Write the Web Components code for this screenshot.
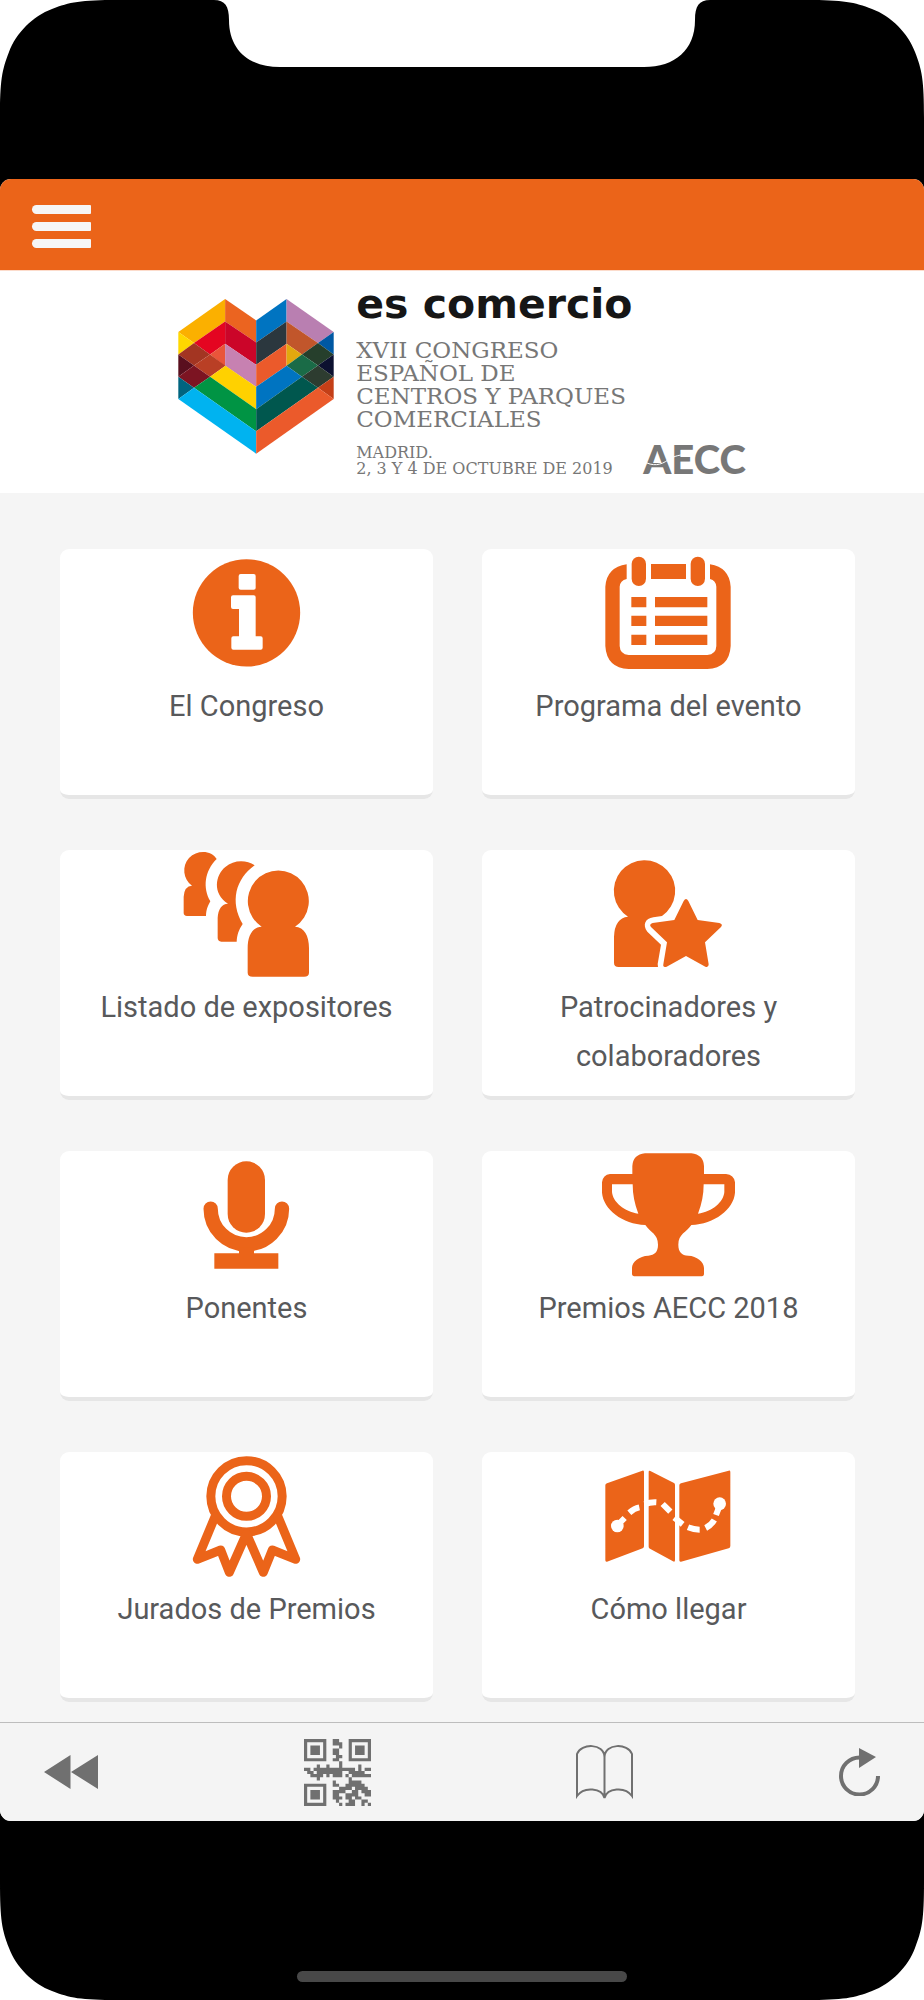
<!DOCTYPE html>
<html lang="es">
<head>
<meta charset="utf-8">
<meta name="viewport" content="width=device-width, initial-scale=1">
<title>es comercio</title>
<style>
    body {
        margin: 0;
        background: #fff;
        font-family: Roboto, "Liberation Sans", sans-serif;
        --brand: #eb6419;
    }
    .menu {
        display: grid;
        grid-template-columns: 1fr 1fr;
        gap: 51px 49px;
        padding: 56px 69px 20px 60px;
    }
</style>
</head>
<body>
<device-frame>
    <app-topbar></app-topbar>
    <event-header></event-header>
    <main class="menu">
        <menu-card href="#congreso">
            <svg slot="icon" viewBox="390 27 399 399" aria-hidden="true">
                <circle cx="589.5" cy="218.500" r="161"/>
                <g fill="#fff">
                    <rect x="566" y="102" width="51" height="47" rx="6"/>
                    <path d="M549 166H611Q617 166 617 172V289H632Q638 289 638 295V323Q638 329 632 329H550Q544 329 544 323V295Q544 289 550 289H567V207H549Q543 207 543 201V172Q543 166 549 166Z"/>
                </g>
            </svg>
            El Congreso
        </menu-card>
        <menu-card href="#programa">
            <svg slot="icon" viewBox="396 27 399 399" aria-hidden="true">
                <path d="M470 73V117Q450 122 449 140V318Q450 343 476 345H712Q738 343 739 318V140Q738 122 720 117V73Q778 82 782 140V318Q778 384 712 387H476Q410 384 406 318V140Q410 82 470 73Z"/>
                <rect x="485" y="50" width="43" height="88" rx="21.500"/>
                <rect x="662" y="50" width="43" height="88" rx="21.500"/>
                <path d="M543 72H648V117H543ZM484 171H529V202H484ZM484 227H529V258H484ZM484 284H529V315H484ZM555 171H712V202H555ZM555 227H712V258H555ZM555 284H712V315H555Z"/>
            </svg>
            Programa del evento
        </menu-card>
        <menu-card href="#expositores">
            <svg slot="icon" viewBox="390 30 399 399" aria-hidden="true">
                <path d="M635 260A91.500 91.500 0 1 1 735 260C763 261 777 287 777 325V398Q777 410 762 410H608Q593 410 593 398V325C593 287 607 261 635 260Z"/>
                <path d="M614 76C557 117 539 185 578 252C566 270 561 285 560 305H514Q503 303 503 294V233Q506 192 534 191C486 160 496 105 526 81C550 60 588 58 614 76Z"/>
                <path d="M500 57C463 94 458 144 481 184C472 200 469 210 468 228H411Q401 227 401 219V170Q403 138 426 137C399 118 395 78 417 54C442 28 485 31 500 57Z"/>
            </svg>
            Listado de expositores
        </menu-card>
        <menu-card href="#patrocinadores">
            <svg slot="icon" viewBox="396 30 399 399" aria-hidden="true">
                <path d="M474 230A92 92 0 1 1 576 228L550 232C525 235 517 256 532 275L573 314L563 372L564 381H446Q432 381 432 368V290Q434 234 474 230Z"/>
                <path d="M641 183Q648 171 655 183L683 240L748 249Q760 252 753 261L705 307L716 373Q716 384 706 380L648 348L590 380Q578 384 580 373L591 307L543 261Q536 253 548 249L613 240Z"/>
            </svg>
            Patrocinadores y colaboradores
        </menu-card>
        <menu-card href="#ponentes">
            <svg slot="icon" viewBox="390 35 399 399" aria-hidden="true">
                <rect x="533" y="66" width="112" height="214" rx="56"/>
                <path d="M482 208A107 107 0 0 0 696 208" fill="none" stroke="currentColor" stroke-width="43" stroke-linecap="round"/>
                <path d="M567 325H612V342H685V388H493V342H567Z"/>
            </svg>
            Ponentes
        </menu-card>
        <menu-card href="#premios">
            <svg slot="icon" viewBox="396 35 399 399" aria-hidden="true">
                <path fill-rule="evenodd" d="M525 42H664Q700 46 702 80V104H768Q792 106 795 129V160C791 210 733 254 664 257C649 279 625 284 625 316C625 337 635 348 655 349C680 350 702 367 702 386V405Q701 411 696 411H492Q486 410 486 405V386C486 367 508 350 535 349C554 347 564 337 564 316C564 284 541 279 526 257C457 254 400 210 396 160V129Q399 106 420 104H487V80Q489 46 525 42ZM426 135V158C428 187 463 217 505 223Q488 180 488 135ZM701 135Q701 180 684 223C728 217 761 187 763 158V135Z"/>
            </svg>
            Premios AECC 2018
        </menu-card>
        <menu-card href="#jurados">
            <svg slot="icon" viewBox="390 37 399 399" aria-hidden="true">
                <g fill="none" stroke="currentColor" stroke-width="27" stroke-linejoin="round" stroke-linecap="round">
                    <circle cx="589.500" cy="170" r="107"/>
                    <circle cx="589.500" cy="170" r="60"/>
                    <path d="M495 231L442 359L512 331L538 398L589.500 282L640 398L667 331L737 359L684 231"/>
                </g>
            </svg>
            Jurados de Premios
        </menu-card>
        <menu-card href="#llegar">
            <svg slot="icon" viewBox="396 37 399 399" aria-hidden="true">
                <path d="M411 131L517 93Q522 92 522 97V320Q522 324 518 326L411 366Q406 367 406 362V137Q406 133 411 131ZM541 94L612 130Q615 132 615 136V361Q615 368 609 365L540 327Q536 325 536 321V97Q536 92 541 94ZM633 131L776 93Q781 92 781 97V319Q781 324 776 326L633 366Q628 367 628 362V137Q628 132 633 131Z"/>
                <circle cx="442" cy="259" r="19" fill="#fff"/>
                <circle cx="749" cy="192" r="19" fill="#fff"/>
                <path d="M449 250L464 235M478 219Q493 206 508 203M524 194Q541 187 559 188M578 193L601 216M613 234L638 254M654 263Q671 270 689 270M707 265Q724 256 733 241M738 226L747 203" fill="none" stroke="#fff" stroke-width="18"/>
            </svg>
            Cómo llegar
        </menu-card>
    </main>
    <app-toolbar></app-toolbar>
</device-frame>

<script>
(function(){
    //small helper, every component is a class with a template in its shadow root
    const attach = (element, html) => {
        const template = document.createElement('template');
        template.innerHTML = html;
        element.attachShadow({mode:'open'});
        element.shadowRoot.appendChild(template.content.cloneNode(true));
    };

    //phone body : black bezel, notch, rounded corners and home indicator
    const corner = (name) => `
        <svg class="corner ${name}" viewBox="0 0 118 118" aria-hidden="true">
            <path d="M0 0H118C80 0 70 2 52 9C33 16 16 33 9 52C2 70 0 80 0 118Z" fill="#fff"/>
        </svg>`;

    class DeviceFrame extends HTMLElement {
        constructor()
        {
            super();
            attach(this, `
            <style>
                :host {
                    position: relative;
                    display: flex;
                    flex-direction: column;
                    min-height: 100vh;
                    background: #000;
                }
                .top {
                    display: flex;
                    justify-content: center;
                    align-items: flex-start;
                    height: 179px;
                }
                .screen {
                    overflow: hidden;
                    border-radius: 11px;
                    background: #f5f5f5;
                }
                .bottom {
                    flex: 1;
                    display: flex;
                    justify-content: center;
                    align-items: flex-end;
                    min-height: 160px;
                    padding-bottom: 18px;
                }
                .home {
                    width: 330px;
                    height: 11px;
                    border-radius: 6px;
                    background: #484848;
                }
                .corner {
                    position: absolute;
                    width: 118px;
                    height: 118px;
                }
                .tl { top: 0; left: 0; }
                .tr { top: 0; right: 0; transform: scaleX(-1); }
                .bl { bottom: 0; left: 0; transform: scaleY(-1); }
                .br { bottom: 0; right: 0; transform: scale(-1); }
            </style>
            <div class="top">
                <svg width="496" height="68" viewBox="0 0 496 68" aria-hidden="true">
                    <path d="M0 0C11 0 15 6 15 20C15 50 35 67 66 67H430C461 67 481 50 481 20C481 6 485 0 496 0Z" fill="#fff"/>
                </svg>
            </div>
            <div class="screen"><slot></slot></div>
            <div class="bottom"><div class="home"></div></div>
            ${corner('tl')}${corner('tr')}${corner('bl')}${corner('br')}`);
        }
    }
    customElements.define('device-frame', DeviceFrame);

    class AppTopbar extends HTMLElement {
        constructor()
        {
            super();
            attach(this, `
            <style>
                :host {
                    display: flex;
                    align-items: center;
                    height: 91px;
                    padding: 0 32px;
                    background: var(--brand);
                }
                button {
                    display: grid;
                    gap: 8px;
                    width: 59px;
                    padding: 3px 0 0;
                    border: 0;
                    background: none;
                }
                span {
                    height: 9px;
                    border-radius: 5px 1px 1px 5px;
                    background: #f6f6f6;
                }
            </style>
            <button type="button" aria-label="Menú"><span></span><span></span><span></span></button>`);
        }
    }
    customElements.define('app-topbar', AppTopbar);

    //congress banner : folded ribbons heart, title, place and date, organizer
    class EventHeader extends HTMLElement {
        constructor()
        {
            super();
            attach(this, `
            <style>
                :host {
                    display: flex;
                    justify-content: center;
                    box-sizing: border-box;
                    padding: 10px 16px 16px;
                    border-top: 1px solid #fcdccc;
                    background: #fff;
                    color: #777;
                    font-family: "DejaVu Serif", serif;
                }
                .heart {
                    width: 156px;
                    height: 155px;
                    margin: 18px 22px 0 0;
                }
                .info {
                    width: 287px;
                    white-space: nowrap;
                }
                h1, h2, p {
                    margin: 0;
                    font-weight: normal;
                }
                h1 {
                    color: #161616;
                    font-family: "DejaVu Sans", sans-serif;
                    font-size: 41px;
                    font-weight: bold;
                    line-height: 46px;
                }
                h2 {
                    margin-top: 12px;
                    font-size: 23px;
                    line-height: 23px;
                }
                p {
                    margin-top: 14px;
                    font-size: 16px;
                    line-height: 16px;
                }
                .org {
                    position: relative;
                    align-self: flex-end;
                    font: 900 40px/36px Lato, sans-serif;
                }
                .org svg {
                    position: absolute;
                    left: 0;
                    bottom: 0;
                    width: 46px;
                    height: 36px;
                }
            </style>
            <svg class="heart" viewBox="57 86 467 464" aria-hidden="true">
                <path fill="#fbb000" d="M198 86V153L105 218L58 185Z"/>
                <path fill="#e40521" d="M198 153V220L153 252L105 218Z"/>
                <path fill="#e9553a" d="M198 220V287L153 252Z"/>
                <path fill="#ffd800" d="M58 185L105 218L58 252Z"/>
                <path fill="#a33522" d="M105 218L153 252L105 285L58 252Z"/>
                <path fill="#b93f25" d="M153 252L199 286L153 319L105 285Z"/>
                <path fill="#590f1e" d="M58 252L105 285L58 319Z"/>
                <path fill="#7c1422" d="M105 285L153 319L105 352L58 319Z"/>
                <path fill="#00647f" d="M58 319L105 352L58 385Z"/>
                <path fill="#eb6420" d="M198 86L291 150V216L198 153Z"/>
                <path fill="#cb0529" d="M198 153L291 216V283L198 220Z"/>
                <path fill="#c781b1" d="M198 220L291 283V349L198 286Z"/>
                <path fill="#ffd100" d="M199 286L291 349V416L153 319Z"/>
                <path fill="#009444" d="M153 319L291 416V482L105 352Z"/>
                <path fill="#00b3f0" d="M105 352L291 482V549L58 385Z"/>
                <path fill="#0074c1" d="M382 86L291 150V216L382 153Z"/>
                <path fill="#2b373e" d="M382 153L291 216V283L382 220Z"/>
                <path fill="#eb5a2b" d="M382 220L291 283V349L382 286Z"/>
                <path fill="#b97fb1" d="M382 86L523 185L476 218L382 153Z"/>
                <path fill="#c1562b" d="M382 153L476 218L428 252L382 220Z"/>
                <path fill="#e2a80e" d="M382 220L428 252L382 286Z"/>
                <path fill="#0058a3" d="M523 185V252L476 218Z"/>
                <path fill="#263f2c" d="M476 218L523 252L476 285L428 252Z"/>
                <path fill="#1a6b47" d="M428 252L476 285L428 319L382 286Z"/>
                <path fill="#0c1130" d="M523 252V319L476 285Z"/>
                <path fill="#2d3c30" d="M476 285L523 319L476 352L428 319Z"/>
                <path fill="#c43f17" d="M523 319V385L476 352Z"/>
                <path fill="#0074c1" d="M382 286L428 319L291 416V349Z"/>
                <path fill="#00574e" d="M428 319L476 352L291 482V416Z"/>
                <path fill="#eb5a2b" d="M476 352L523 385L291 549V482Z"/>
            </svg>
            <div class="info">
                <h1>es comercio</h1>
                <h2>XVII CONGRESO<br>ESPAÑOL DE<br>CENTROS Y PARQUES<br>COMERCIALES</h2>
                <p>MADRID.<br>2, 3 Y 4 DE OCTUBRE DE 2019</p>
            </div>
            <div class="org">AECC
                <svg viewBox="0 0 46 36" aria-hidden="true">
                    <path d="M0 20C10 26 18 24 25 19C31 15 38 13 46 14" fill="none" stroke="#fff" stroke-width="1"/>
                </svg>
            </div>`);
        }
    }
    customElements.define('event-header', EventHeader);

    //one entry of the menu, icon comes from the "icon" slot
    class MenuCard extends HTMLElement {
        constructor()
        {
            super();
            attach(this, `
            <style>
                :host {
                    display: block;
                }
                a {
                    display: flex;
                    flex-direction: column;
                    align-items: center;
                    box-sizing: border-box;
                    min-height: 250px;
                    border-bottom: 4px solid #e6e6e6;
                    border-radius: 9px;
                    background: #fff;
                    color: #58595b;
                    font-size: 29px;
                    line-height: 49px;
                    text-align: center;
                    text-decoration: none;
                }
                ::slotted(svg) {
                    display: block;
                    flex: none;
                    width: 133px;
                    height: 133px;
                    overflow: visible;
                    color: var(--brand);
                    fill: currentColor;
                }
            </style>
            <a><slot name="icon"></slot><span><slot></slot></span></a>`);
        }

        connectedCallback(){
            this.shadowRoot.querySelector('a').href = this.getAttribute('href');
        }
    }
    customElements.define('menu-card', MenuCard);

    //modules of the QR icon, one string by row
    const QR = [
        '#######..##...#######',
        '#.....#..###..#.....#',
        '#.###.#....#..#.###.#',
        '#.###.#..##...#.###.#',
        '#.###.#..##...#.###.#',
        '#.....#...##..#.....#',
        '#######..##...#######',
        '...........#.........',
        '....#..#...#.....#...',
        '##.#############.#.##',
        '.##.########..#####..',
        '..####.#.###.#.######',
        '....#.........#......',
        '.........#....####...',
        '#######..##..######..',
        '#.....#....####.####.',
        '#.###.#..####..##.###',
        '#.###.#..##..####..##',
        '#.###.#..###.##.##...',
        '#.....#...#...##..##.',
        '#######....#.###..#.#'
    ];
    const modules = QR.map((row, y) => [...row].map((cell, x) => cell === '#' ? `M${x} ${y}h1v1h-1z` : '').join('')).join('');

    class AppToolbar extends HTMLElement {
        constructor()
        {
            super();
            attach(this, `
            <style>
                :host {
                    display: flex;
                    justify-content: space-between;
                    align-items: center;
                    height: 98px;
                    padding: 0 44px;
                    border-top: 1px solid #bdbdbd;
                    background: #f4f4f4;
                    color: #707070;
                }
                button {
                    padding: 0;
                    border: 0;
                    background: none;
                    color: inherit;
                }
                svg {
                    display: block;
                }
            </style>
            <button type="button" aria-label="Atrás">
                <svg width="54" height="34" viewBox="0 0 54 34" fill="currentColor"><path d="M26.500 0V34L0 17ZM54 0V34L27 17Z"/></svg>
            </button>
            <button type="button" aria-label="Código QR">
                <svg width="67" height="67" viewBox="0 0 21 21" fill="currentColor"><path d="${modules}"/></svg>
            </button>
            <button type="button" aria-label="Guía">
                <svg width="57" height="54" viewBox="0 0 57 54" fill="none" stroke="currentColor" stroke-width="2">
                    <path d="M28.500 53C26 43 8 41 1 51V9C5-2 28-2 28.500 12C29-2 52-2 56 9V51C49 41 31 43 28.500 53V12"/>
                </svg>
            </button>
            <button type="button" aria-label="Recargar">
                <svg width="41" height="48" viewBox="0 0 41 48">
                    <path d="M20.500 9.500A18.500 18.500 0 1 0 39 28" fill="none" stroke="currentColor" stroke-width="4"/>
                    <path d="M20 0L37 9L20 20Z" fill="currentColor"/>
                </svg>
            </button>`);
        }
    }
    customElements.define('app-toolbar', AppToolbar);
})();
</script>
</body>
</html>
